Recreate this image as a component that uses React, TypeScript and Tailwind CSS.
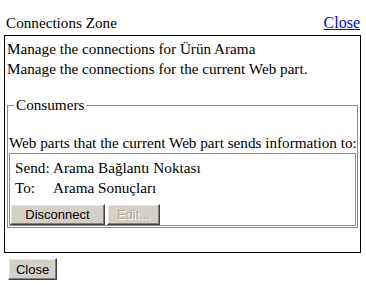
export default function App() {
  const btn =
    "h-[21px] bg-[#d4d0c8] border border-t-white border-l-white border-r-[#404040] border-b-[#404040] shadow-[inset_-1px_-1px_#808080,inset_1px_1px_#e8e6e1] font-['Liberation_Sans',Arial,sans-serif] text-[13px] leading-[15px]"

  return (
    <div className="min-h-[289px] w-[366px] bg-white pl-[4px] pt-[13px] font-['Liberation_Serif','Times_New_Roman',serif] text-[15.2px] leading-[20px] text-black">
      <div className="w-[357px]">
        <div className="flex h-[22px] justify-between pl-[2px] pr-[1px]">
          <span>Connections Zone</span>
          <a href="#" className="text-[16px] text-[#0000ff] underline">
            Close
          </a>
        </div>

        <div className="border border-black px-[2px] pt-[3px] pb-[24px]">
          <div>Manage the connections for Ürün Arama</div>
          <div>Manage the connections for the current Web part.</div>

          <fieldset className="mt-[16px] min-w-0 border border-[#8c8c8c] px-[1px] pb-[1px]">
            <legend className="ml-[5px] px-[2px] leading-[20px]">Consumers</legend>
            <div className="mt-[18px] whitespace-nowrap">
              Web parts that the current Web part sends information to:
            </div>
            <div className="border border-[#8c8c8c]">
              <div className="grid grid-cols-[38px_1fr] pl-[5px] pt-[4px]">
                <span>Send:</span>
                <span>Arama Bağlantı Noktası</span>
                <span>To:</span>
                <span>Arama Sonuçları</span>
              </div>
              <div className="mt-[6px] flex gap-[2px]">
                <button className={`${btn} w-[95px] text-black`}>Disconnect</button>
                <button
                  disabled
                  className={`${btn} w-[53px] text-[#aca899] [text-shadow:1px_1px_#ffffff]`}
                >
                  Edit...
                </button>
              </div>
            </div>
          </fieldset>
        </div>

        <button className={`${btn} mt-[5px] ml-[4px] h-[22px] w-[49px] text-black`}>Close</button>
      </div>
    </div>
  )
}
